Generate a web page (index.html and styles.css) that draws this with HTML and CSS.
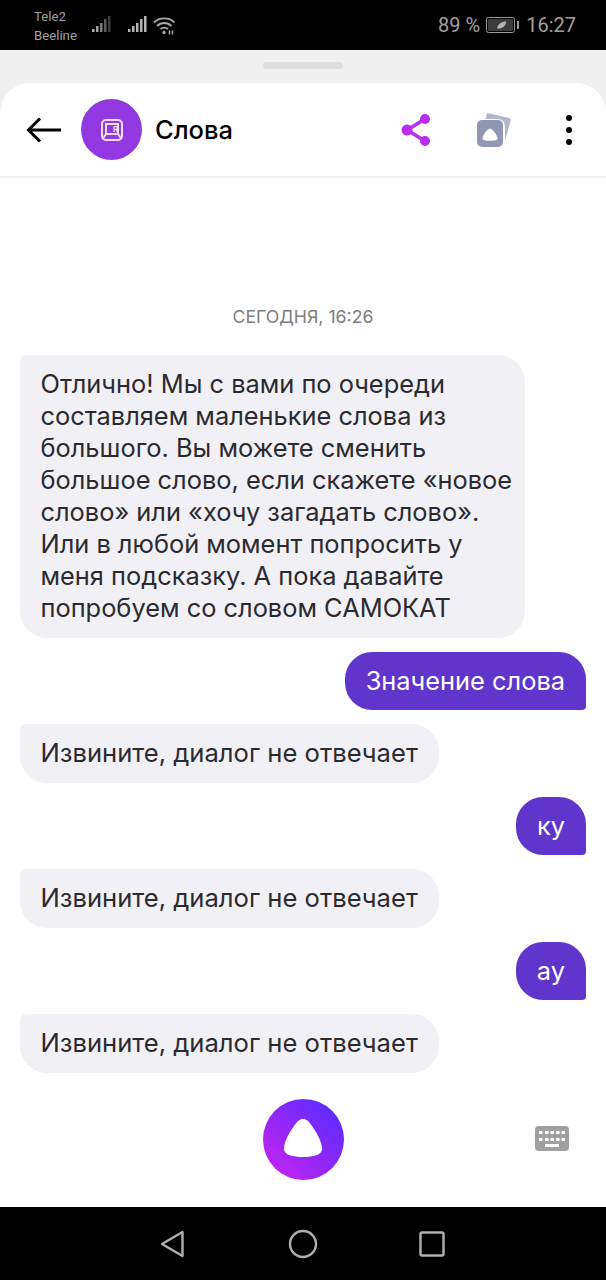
FILE: index.html
```html
<!DOCTYPE html>
<html lang="ru">
<head>
<meta charset="utf-8">
<title>Слова</title>
<link rel="stylesheet" href="styles.css">
</head>
<body>
<div class="phone">
  <div class="status">
    <div class="carriers"><span>Tele2</span><span>Beeline</span></div>
    <svg class="sig1" width="22" height="20" viewBox="0 0 22 20"><rect x="1" y="13" width="2.500" height="3" fill="#b0b0b0"/><rect x="5" y="10" width="2.500" height="6" fill="#a0a0a0"/><rect x="9" y="7" width="2.500" height="9" fill="#808080"/><rect x="13" y="3" width="2.500" height="13" fill="#5c5c5c"/><rect x="17" y="0" width="2.500" height="16" fill="#3c3c3c"/></svg>
    <svg class="sig2" width="22" height="20" viewBox="0 0 22 20"><g fill="#b5b5b5"><rect x="1" y="13" width="2.500" height="3"/><rect x="5" y="10" width="2.500" height="6"/><rect x="9" y="7" width="2.500" height="9"/><rect x="13" y="3" width="2.500" height="13"/><rect x="17" y="0" width="2.500" height="16"/></g></svg>
    <svg class="wifi" width="24" height="20" viewBox="0 0 24 20"><g fill="none" stroke="#a8a8a8" stroke-width="1.8"><path d="M1 6.500C6.500 1 16 1 21.500 6.500"/><path d="M4 10C8 6 14.500 6 18.500 10"/><path d="M7.500 13C9.500 11.200 13 11.200 15 13"/></g><circle cx="11" cy="16.500" r="1.700" fill="#a8a8a8"/><path d="M16.500 14.500v4M19.500 14.500v4" stroke="#a8a8a8" stroke-width="1.500"/></svg>
    <div class="spacer"></div>
    <span class="pct">89 %</span>
    <svg class="batt" width="33" height="16" viewBox="0 0 33 16"><rect x=".5" y=".5" width="28" height="15" rx="2" fill="none" stroke="#9a9a9a"/><rect x="2" y="2" width="25" height="12" rx="1" fill="#3c3c3c"/><path d="M11 11.500C12 6.500 16 4.500 20 4.500 20 8.500 17 12 11 11.500Z" fill="#b5b5b5"/><rect x="31" y="4" width="2" height="8" fill="#9a9a9a"/></svg>
    <span class="clock">16:27</span>
  </div>
  <div class="sheet">
    <div class="handle-zone"><div class="handle"></div></div>
    <div class="card">
      <header class="head">
        <svg class="back" width="36" height="28" viewBox="0 0 36 28"><path d="M2 14H35M14 2.500 2.500 14 14 25.500" fill="none" stroke="#000" stroke-width="3"/></svg>
        <div class="avatar">
          <svg width="24" height="24" viewBox="0 0 24 24"><g fill="none" stroke="#f3def9" stroke-width="2"><rect x="2" y="2" width="20" height="20" rx="4"/><path d="M6 16V6H18V16M6 16H18M6 16 2.500 21M18 16 21.500 21"/></g><text class="keycap" x="15.500" y="13.500" text-anchor="middle">Я</text></svg>
        </div>
        <h1 class="title">Слова</h1>
        <div class="spacer"></div>
        <svg class="share" width="30" height="34" viewBox="0 0 30 34"><path d="M24 6 6 17 24 28" fill="none" stroke="#b92cf0" stroke-width="3.500"/><circle cx="6" cy="17" r="5.500" fill="#b92cf0"/><circle cx="24" cy="6" r="5" fill="#b92cf0"/><circle cx="24" cy="28" r="5" fill="#b92cf0"/></svg>
        <svg class="stack" width="34" height="34" viewBox="0 0 34 34"><path d="M10 0 32 5C33.500 5.400 34 6.300 33.700 7.500L28 28V14C28 9 25 6 21 6H8.500Z" fill="#b1b6ca"/><rect x="0" y="7" width="26" height="27" rx="5" fill="#8f97b3"/><path d="M13 15.500C15 15.500 20.500 22 20.500 25.500 20.500 27.500 17 27.800 13 27.800 9 27.800 5.500 27.500 5.500 25.500 5.500 22 11 15.500 13 15.500Z" fill="#fff"/></svg>
        <div class="dots"><i></i><i></i><i></i></div>
      </header>
      <main class="chat">
        <div class="stamp">СЕГОДНЯ, 16:26</div>
        <div class="msg bot wide">Отлично! Мы с вами по очереди составляем маленькие слова из большого. Вы можете сменить большое слово, если скажете «новое слово» или «хочу загадать слово». Или в любой момент попросить у меня подсказку. А пока давайте попробуем со словом САМОКАТ</div>
        <div class="msg user">Значение слова</div>
        <div class="msg bot">Извините, диалог не отвечает</div>
        <div class="msg user">ку</div>
        <div class="msg bot">Извините, диалог не отвечает</div>
        <div class="msg user">ау</div>
        <div class="msg bot">Извините, диалог не отвечает</div>
      </main>
      <footer class="foot">
        <div class="alice">
          <svg class="blob" width="38" height="38" viewBox="0 0 38 38"><path d="M19 0C22.500 0 25 2.500 28 7 33 14 38 23 38 30 38 36 29 38 19 38 9 38 0 36 0 30 0 23 5 14 10 7 13 2.500 15.500 0 19 0Z" fill="#fff"/></svg>
        </div>
        <svg class="kbd" width="34" height="25" viewBox="0 0 34 25"><rect width="34" height="25" rx="4" fill="#a0a0a0"/><g fill="#fff"><rect x="4" y="5" width="3.500" height="3"/><rect x="10" y="5" width="3.500" height="3"/><rect x="15.500" y="5" width="3.500" height="3"/><rect x="21" y="5" width="3.500" height="3"/><rect x="26.500" y="5" width="3.500" height="3"/><rect x="4" y="12" width="3.500" height="3"/><rect x="10" y="12" width="3.500" height="3"/><rect x="15.500" y="12" width="3.500" height="3"/><rect x="21" y="12" width="3.500" height="3"/><rect x="26.500" y="12" width="3.500" height="3"/><rect x="10" y="18" width="14" height="3"/></g></svg>
      </footer>
    </div>
  </div>
  <nav class="nav">
    <svg width="30" height="30" viewBox="0 0 30 30"><path d="M23.500 3V27L3 15Z" fill="none" stroke="#b0b0b0" stroke-width="2.400" stroke-linejoin="round"/></svg>
    <svg width="30" height="30" viewBox="0 0 30 30"><circle cx="15" cy="15" r="13" fill="none" stroke="#b0b0b0" stroke-width="2.400"/></svg>
    <svg width="30" height="30" viewBox="0 0 30 30"><rect x="3.500" y="3.500" width="23" height="23" rx="1.500" fill="none" stroke="#b0b0b0" stroke-width="2.400"/></svg>
  </nav>
</div>
</body>
</html>
```
FILE: styles.css
```css
* { box-sizing: border-box; }
html, body { margin: 0; padding: 0; background: #000; }
.phone {
  width: 606px; height: 1280px; display: flex; flex-direction: column; overflow: hidden;
  font-family: Inter, "Liberation Sans", sans-serif;
}
.spacer { flex: 1; }
.status {
  height: 50px; flex: none; background: #000; color: #a0a0a0;
  display: flex; align-items: center; padding: 0 30px 0 34px;
}
.carriers { display: flex; flex-direction: column; font: 13.2px/19px Roboto, sans-serif; width: 57px; margin-top: 2px; }
.sig1 { margin-top: 2px; margin-right: 14px; }
.sig2 { margin-top: 2px; margin-right: 4px; }
.wifi { margin-top: 2px; }
.pct { font: 20px/24px Roboto, sans-serif; margin-right: 6px; }
.batt { margin-right: 7px; }
.clock { font: 20px/24px Roboto, sans-serif; }
.sheet { flex: 1; min-height: 0; background: #f0f0f0; display: flex; flex-direction: column; }
.handle-zone { height: 33px; flex: none; display: flex; justify-content: center; padding-top: 12px; }
.handle { width: 80px; height: 7px; border-radius: 4px; background: #dedede; }
.card { flex: 1; min-height: 0; background: #fff; border-radius: 30px 30px 0 0; display: flex; flex-direction: column; }
.head { height: 95px; flex: none; display: flex; align-items: center; padding: 0 34px 0 26px; border-bottom: 2px solid #f0f0f0; }
.back { margin-right: 19px; }
.avatar { width: 61px; height: 61px; border-radius: 50%; background: #9238e0; display: flex; align-items: center; justify-content: center; margin-right: 13px; }
.keycap { font-size: 8px; font-weight: 700; fill: #f3def9; }
.title { margin: 0; font-size: 25.5px; line-height: 32px; font-weight: 500; color: #000; }
.share { margin-right: 46px; }
.stack { margin-right: 55px; }
.dots { display: flex; flex-direction: column; gap: 6px; }
.dots i { width: 6px; height: 6px; border-radius: 50%; background: #000; display: block; }
.chat { flex: 1; min-height: 0; display: flex; flex-direction: column; gap: 14px; padding: 0 20px; }
.stamp { margin-top: 127px; margin-bottom: 12px; text-align: center; font-size: 17.7px; line-height: 24px; color: #7d7d7d; }
.msg { padding: 13.25px 21px; font-size: 25.4px; line-height: 32px; border-radius: 27px; max-width: 505px; }
.bot { align-self: flex-start; background: #f1f0f5; color: #2b2a30; padding-left: 20.5px; font-size: 25.6px; border-top-left-radius: 6px; }
.wide { width: 505px; padding-right: 4px; font-size: 25.4px; }
.user { align-self: flex-end; background: #6035cb; color: #fff; border-bottom-right-radius: 4px; }
.foot { height: 135px; flex: none; display: flex; align-items: center; justify-content: center; position: relative; }
.alice { width: 81px; height: 81px; border-radius: 50%; background: linear-gradient(225deg, #5a2cff 10%, #bb24f0 85%); display: flex; align-items: center; justify-content: center; }
.blob { margin-bottom: 3px; }
.kbd { position: absolute; right: 37px; top: 54px; }
.nav { height: 73px; flex: none; background: #000; display: flex; justify-content: center; align-items: center; gap: 99px; }
```
